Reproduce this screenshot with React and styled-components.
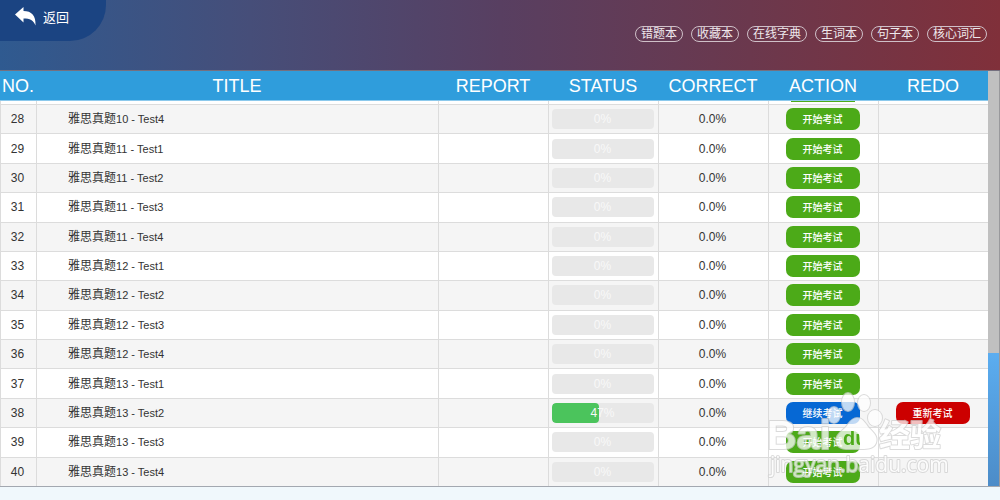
import React from 'react';
import styled, { createGlobalStyle } from 'styled-components';

const GlobalStyle = createGlobalStyle`
* { box-sizing:border-box; }
body {
    margin:0;
    background-color:#f0f8fc;
    font-family:'Liberation Sans', 'Noto Sans CJK SC', sans-serif;
}
`

const columns = '36px minmax(180px, 1fr) repeat(5, 110px)';

const Page = styled.div`
position:relative;
min-height:100vh;
display:flex;
flex-direction:column;
padding-bottom:13px;
`

const TopBar = styled.header`
height:71px;
display:flex;
justify-content:space-between;
align-items:flex-start;
border-bottom:1px solid #75707f;
background-image:linear-gradient(90deg, #2f5a90 0%, #464e79 25%, #583f61 50%, #6b384d 75%, #80303a 100%);
`

const BackButton = styled.button`
width:106px;
height:41px;
padding:0 0 8px 15px;
display:flex;
align-items:center;
gap:7px;
border:none;
border-bottom-right-radius:36px;
background-color:#1b4482;
color:white;
font-family:inherit;
font-size:13px;
cursor:pointer;
`

const Nav = styled.nav`
display:flex;
gap:8px;
padding:26px 13px 0 0;
`

const NavPill = styled.a`
height:16px;
padding:0 5px;
border:1px solid #cfc0c8;
border-radius:8px;
color:#efe8ec;
font-size:12px;
line-height:14px;
text-decoration:none;
`

const Content = styled.main`
flex:1;
display:flex;
border-bottom:1px solid #a3a8b0;
`

const Table = styled.table`
flex:1;
display:flex;
flex-direction:column;
background-color:white;
`

const Thead = styled.thead`
display:block;
`

const HeadRow = styled.tr`
height:30px;
display:grid;
grid-template-columns:${columns};
align-items:center;
background-color:#2f9ddc;
border-bottom:1px solid #8cc9ec;
`

const Th = styled.th`
padding:0;
color:white;
font-size:18px;
font-weight:400;
line-height:20px;
text-align:center;
`

const Tbody = styled.tbody`
flex:1;
display:grid;
grid-template-rows:3px repeat(13, minmax(24px, 1fr));
`

const Row = styled.tr`
display:grid;
grid-template-columns:${columns};
border-top:1px solid #dcdcdc;
background-color:${props => props.$odd ? 'white' : '#f5f5f5'};
`

// bottom edge of the row that is scrolled under the header
const CutRow = styled(Row)`
border-top:none;
overflow:hidden;
`

const Td = styled.td`
padding:0 2px 0 0;
display:flex;
align-items:center;
justify-content:${props => props.$left ? 'flex-start' : 'center'};
padding-left:${props => props.$left ? '31px' : '0'};
border-left:1px solid #dcdcdc;
color:#333;
font-size:12px;
line-height:16px;
`

const TestName = styled.span`
font-size:11px;
`

const Progress = styled.div`
position:relative;
width:102px;
height:20px;
border-radius:4px;
overflow:hidden;
background-color:#e8e8e8;
`

const ProgressFill = styled.div`
height:100%;
border-radius:4px;
background-color:#4bc45c;
`

const ProgressText = styled.span`
position:absolute;
inset:0;
color:#f8f8f8;
line-height:20px;
text-align:center;
`

const ActionButton = styled.button`
width:74px;
height:22px;
padding:0 0 1px;
border:none;
border-radius:7px;
background-color:${props => props.$color};
color:white;
font-family:inherit;
font-size:10px;
font-weight:500;
cursor:pointer;
`

const CutButton = styled.div`
width:64px;
height:1px;
align-self:flex-start;
background-color:#4caa18;
`

const ScrollTrack = styled.div`
width:12px;
display:flex;
flex-direction:column;
justify-content:flex-end;
background-color:#c0c0c0;
border-right:1px solid #99999c;
`

const ScrollThumb = styled.div`
height:32%;
background-image:linear-gradient(#5badf0, #4c8cc8);
`

const Watermark = styled.svg`
position:absolute;
right:50px;
bottom:20px;
width:184px;
height:90px;
pointer-events:none;

g{
    fill:white;
    stroke:#cfcfcf;
    stroke-width:2px;
    paint-order:stroke;
    stroke-linejoin:round;
    opacity:0.75;
}
`

const MarkName = styled.text`
font-family:'Liberation Sans', 'Noto Sans CJK SC', sans-serif;
font-size:${props => props.$size};
font-weight:700;
`

const MarkSite = styled.text`
font-family:'Open Sans', sans-serif;
font-size:21px;
`

const links = ['错题本', '收藏本', '在线字典', '生词本', '句子本', '核心词汇'];
const heads = ['NO.', 'TITLE', 'REPORT', 'STATUS', 'CORRECT', 'ACTION', 'REDO'];

const rows = Array.from({ length: 13 }, (_, i) => {
    const no = 28 + i;
    return {
        no,
        book: 10 + Math.floor((i + 3) / 4),
        test: ((i + 3) % 4) + 1,
        status: no === 38 ? 47 : 0
    };
});

function BackIcon() {
    return (
        <svg width="21" height="19" viewBox="0 0 21 19" aria-hidden="true">
            <path fill="#fff" d="M0 7.500 8.500 0v4C16.500 4 21 8.500 20.500 18.500 18.500 13.200 15 11.500 8.500 11.500v4z" />
        </svg>
    )
}

function BaiduMark() {
    return (
        <Watermark viewBox="0 0 184 90" aria-hidden="true">
            <mask id="paw" maskUnits="userSpaceOnUse" x="60" y="20" width="60" height="45">
                <rect x="60" y="20" width="60" height="45" fill="#fff" />
                <MarkName x="77" y="55" $size="20px" fill="#000">du</MarkName>
            </mask>
            <g>
                <MarkName x="1" y="59" $size="41px">Bai</MarkName>
                <MarkName x="113" y="56" $size="31px">经验</MarkName>
                <MarkSite x="4" y="82">jingyan.baidu.com</MarkSite>
                <ellipse cx="68" cy="25" rx="6" ry="8" />
                <ellipse cx="82" cy="12" rx="6" ry="9" />
                <ellipse cx="98" cy="13" rx="6" ry="8" />
                <ellipse cx="109" cy="28" rx="7" ry="8" />
                <path mask="url(#paw)" d="M91 28c6 0 8 5 12 10 6 6 9 9 7 15-3 7-11 6-20 6s-16 1-19-5c-3-6 2-11 8-16 4-4 6-10 12-10z" />
            </g>
        </Watermark>
    )
}

function TestRow({ row }) {
    const started = row.status > 0;
    return (
        <Row $odd={row.no % 2 === 1}>
            <Td>{row.no}</Td>
            <Td $left>雅思真题<TestName>{row.book} - Test{row.test}</TestName></Td>
            <Td />
            <Td>
                <Progress>
                    <ProgressFill style={{ width: row.status + '%' }} />
                    <ProgressText>{row.status}%</ProgressText>
                </Progress>
            </Td>
            <Td>0.0%</Td>
            <Td>
                <ActionButton $color={started ? '#0668d4' : '#4caa18'}>{started ? '继续考试' : '开始考试'}</ActionButton>
            </Td>
            <Td>{started && <ActionButton $color="#cc0000">重新考试</ActionButton>}</Td>
        </Row>
    )
}

export default function App() {
    return (
        <Page>
            <GlobalStyle />
            <TopBar>
                <BackButton><BackIcon />返回</BackButton>
                <Nav>
                    {links.map(link => <NavPill key={link} href="#">{link}</NavPill>)}
                </Nav>
            </TopBar>
            <Content>
                <Table>
                    <Thead>
                        <HeadRow>
                            {heads.map(head => <Th key={head} scope="col">{head}</Th>)}
                        </HeadRow>
                    </Thead>
                    <Tbody>
                        <CutRow $odd aria-hidden="true">
                            <Td /><Td /><Td /><Td /><Td /><Td><CutButton /></Td><Td />
                        </CutRow>
                        {rows.map(row => <TestRow key={row.no} row={row} />)}
                    </Tbody>
                </Table>
                <ScrollTrack><ScrollThumb /></ScrollTrack>
            </Content>
            <BaiduMark />
        </Page>
    )
}
